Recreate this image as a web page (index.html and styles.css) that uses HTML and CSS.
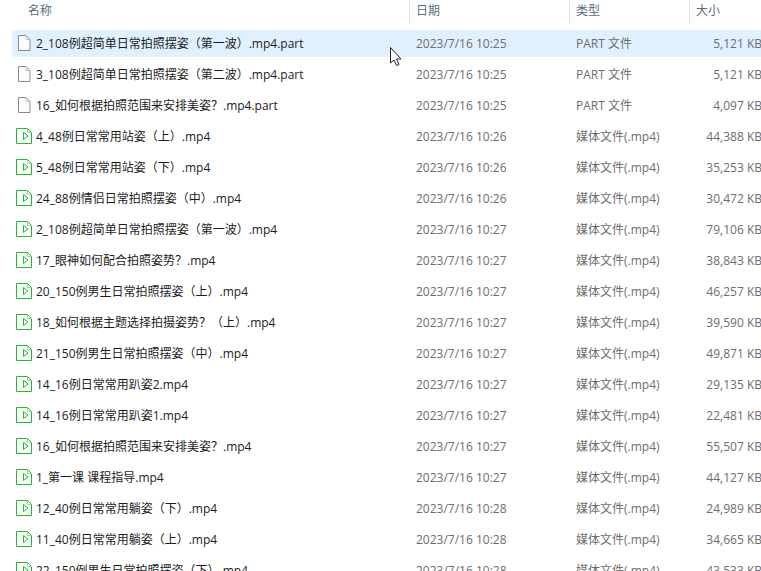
FILE: index.html
```html
<!DOCTYPE html>
<html lang="zh-CN">

<head>
    <meta charset="UTF-8">
    <title>文件列表</title>
    <link rel="stylesheet" href="styles.css">
</head>

<body>
    <svg class="defs" width="0" height="0">
        <symbol id="file" viewBox="0 0 16 18">
            <path d="M2.500 1.500h7.500l4 4v11h-11.500z" fill="#fdfdfd" stroke="#8a8a8a" />
            <path d="M10 1.500v4h4" fill="none" stroke="#c4c4c4" />
        </symbol>
        <symbol id="video" viewBox="0 0 16 18">
            <path d="M.5 1.500h11l4 4v11h-15z" fill="#fff" stroke="#1dbb2b" />
            <path d="M11.500 1.500v4h4" fill="none" stroke="#8fdc97" />
            <path d="M7.500 5.500l4.500 3.500-4.500 3.500z" fill="#fff" stroke="#1dbb2b" />
        </symbol>
    </svg>
    <div class="list">
        <div class="head">
            <div class="col name">名称</div>
            <div class="col date">日期</div>
            <div class="col type">类型</div>
            <div class="col size">大小</div>
        </div>
        <div class="row hover">
            <div class="name"><svg class="ic"><use href="#file" /></svg>2_108例超简单日常拍照摆姿（第一波）.mp4.part</div>
            <div class="date">2023/7/16 10:25</div>
            <div class="type">PART 文件</div>
            <div class="size">5,121 KB</div>
            <svg class="cursor" width="14" height="21" viewBox="0 0 14 21">
                <path d="M.5.500v15.500l3.500-3 2.500 5.500 2.500-1-2.500-5.500h4.500z" fill="#fff" stroke="#222" />
            </svg>
        </div>
        <div class="row">
            <div class="name"><svg class="ic"><use href="#file" /></svg>3_108例超简单日常拍照摆姿（第二波）.mp4.part</div>
            <div class="date">2023/7/16 10:25</div>
            <div class="type">PART 文件</div>
            <div class="size">5,121 KB</div>
        </div>
        <div class="row">
            <div class="name"><svg class="ic"><use href="#file" /></svg>16_如何根据拍照范围来安排美姿？.mp4.part</div>
            <div class="date">2023/7/16 10:25</div>
            <div class="type">PART 文件</div>
            <div class="size">4,097 KB</div>
        </div>
        <div class="row">
            <div class="name"><svg class="ic"><use href="#video" /></svg>4_48例日常常用站姿（上）.mp4</div>
            <div class="date">2023/7/16 10:26</div>
            <div class="type">媒体文件(.mp4)</div>
            <div class="size">44,388 KB</div>
        </div>
        <div class="row">
            <div class="name"><svg class="ic"><use href="#video" /></svg>5_48例日常常用站姿（下）.mp4</div>
            <div class="date">2023/7/16 10:26</div>
            <div class="type">媒体文件(.mp4)</div>
            <div class="size">35,253 KB</div>
        </div>
        <div class="row">
            <div class="name"><svg class="ic"><use href="#video" /></svg>24_88例情侣日常拍照摆姿（中）.mp4</div>
            <div class="date">2023/7/16 10:26</div>
            <div class="type">媒体文件(.mp4)</div>
            <div class="size">30,472 KB</div>
        </div>
        <div class="row">
            <div class="name"><svg class="ic"><use href="#video" /></svg>2_108例超简单日常拍照摆姿（第一波）.mp4</div>
            <div class="date">2023/7/16 10:27</div>
            <div class="type">媒体文件(.mp4)</div>
            <div class="size">79,106 KB</div>
        </div>
        <div class="row">
            <div class="name"><svg class="ic"><use href="#video" /></svg>17_眼神如何配合拍照姿势？.mp4</div>
            <div class="date">2023/7/16 10:27</div>
            <div class="type">媒体文件(.mp4)</div>
            <div class="size">38,843 KB</div>
        </div>
        <div class="row">
            <div class="name"><svg class="ic"><use href="#video" /></svg>20_150例男生日常拍照摆姿（上）.mp4</div>
            <div class="date">2023/7/16 10:27</div>
            <div class="type">媒体文件(.mp4)</div>
            <div class="size">46,257 KB</div>
        </div>
        <div class="row">
            <div class="name"><svg class="ic"><use href="#video" /></svg>18_如何根据主题选择拍摄姿势？（上）.mp4</div>
            <div class="date">2023/7/16 10:27</div>
            <div class="type">媒体文件(.mp4)</div>
            <div class="size">39,590 KB</div>
        </div>
        <div class="row">
            <div class="name"><svg class="ic"><use href="#video" /></svg>21_150例男生日常拍照摆姿（中）.mp4</div>
            <div class="date">2023/7/16 10:27</div>
            <div class="type">媒体文件(.mp4)</div>
            <div class="size">49,871 KB</div>
        </div>
        <div class="row">
            <div class="name"><svg class="ic"><use href="#video" /></svg>14_16例日常常用趴姿2.mp4</div>
            <div class="date">2023/7/16 10:27</div>
            <div class="type">媒体文件(.mp4)</div>
            <div class="size">29,135 KB</div>
        </div>
        <div class="row">
            <div class="name"><svg class="ic"><use href="#video" /></svg>14_16例日常常用趴姿1.mp4</div>
            <div class="date">2023/7/16 10:27</div>
            <div class="type">媒体文件(.mp4)</div>
            <div class="size">22,481 KB</div>
        </div>
        <div class="row">
            <div class="name"><svg class="ic"><use href="#video" /></svg>16_如何根据拍照范围来安排美姿？.mp4</div>
            <div class="date">2023/7/16 10:27</div>
            <div class="type">媒体文件(.mp4)</div>
            <div class="size">55,507 KB</div>
        </div>
        <div class="row">
            <div class="name"><svg class="ic"><use href="#video" /></svg>1_第一课 课程指导.mp4</div>
            <div class="date">2023/7/16 10:27</div>
            <div class="type">媒体文件(.mp4)</div>
            <div class="size">44,127 KB</div>
        </div>
        <div class="row">
            <div class="name"><svg class="ic"><use href="#video" /></svg>12_40例日常常用躺姿（下）.mp4</div>
            <div class="date">2023/7/16 10:28</div>
            <div class="type">媒体文件(.mp4)</div>
            <div class="size">24,989 KB</div>
        </div>
        <div class="row">
            <div class="name"><svg class="ic"><use href="#video" /></svg>11_40例日常常用躺姿（上）.mp4</div>
            <div class="date">2023/7/16 10:28</div>
            <div class="type">媒体文件(.mp4)</div>
            <div class="size">34,665 KB</div>
        </div>
        <div class="row">
            <div class="name"><svg class="ic"><use href="#video" /></svg>22_150例男生日常拍照摆姿（下）.mp4</div>
            <div class="date">2023/7/16 10:28</div>
            <div class="type">媒体文件(.mp4)</div>
            <div class="size">43,533 KB</div>
        </div>
    </div>
</body>

</html>
```

FILE: styles.css
```css
* {
    margin: 0;
    padding: 0;
    box-sizing: border-box;
}

html,
body {
    height: 100%;
    overflow: hidden;
    background-color: white;
}

body {
    font-family: "Open Sans", "Noto Sans CJK SC", sans-serif;
    font-size: 12px;
}

.defs {
    display: block;
}

.list {
    padding-left: 12px;
    display: flex;
    flex-direction: column;
    gap: 4px;
}

.head {
    display: grid;
    grid-template-columns: 398px 160px 120px 71px;
    height: 24px;
    margin-bottom: 2px;
    color: #5c6b7e;
}

.col {
    height: 24px;
    line-height: 22px;
    border-right: 1px solid #e5e5e5;
}

.head .name {
    padding-left: 16px;
}

.head .date,
.head .type,
.head .size {
    padding-left: 6px;
}

.head .size {
    border-right: none;
}

.row {
    display: grid;
    grid-template-columns: 397px 160px 120px 73px;
    height: 27px;
    line-height: 27px;
    flex-shrink: 0;
    border-radius: 3px 0 0 3px;
    position: relative;
    color: #6d6d6d;
}

.hover {
    background-color: #e1f0fe;
}

.row .name {
    display: flex;
    align-items: center;
    color: #1c1c1c;
    white-space: nowrap;
}

.row .date,
.row .type {
    padding-left: 7px;
    white-space: nowrap;
}

.row .size {
    text-align: right;
    white-space: nowrap;
}

.ic {
    width: 16px;
    height: 18px;
    margin: 0 4px 1px;
    flex-shrink: 0;
}

.cursor {
    position: absolute;
    left: 378px;
    top: 17px;
}
```
